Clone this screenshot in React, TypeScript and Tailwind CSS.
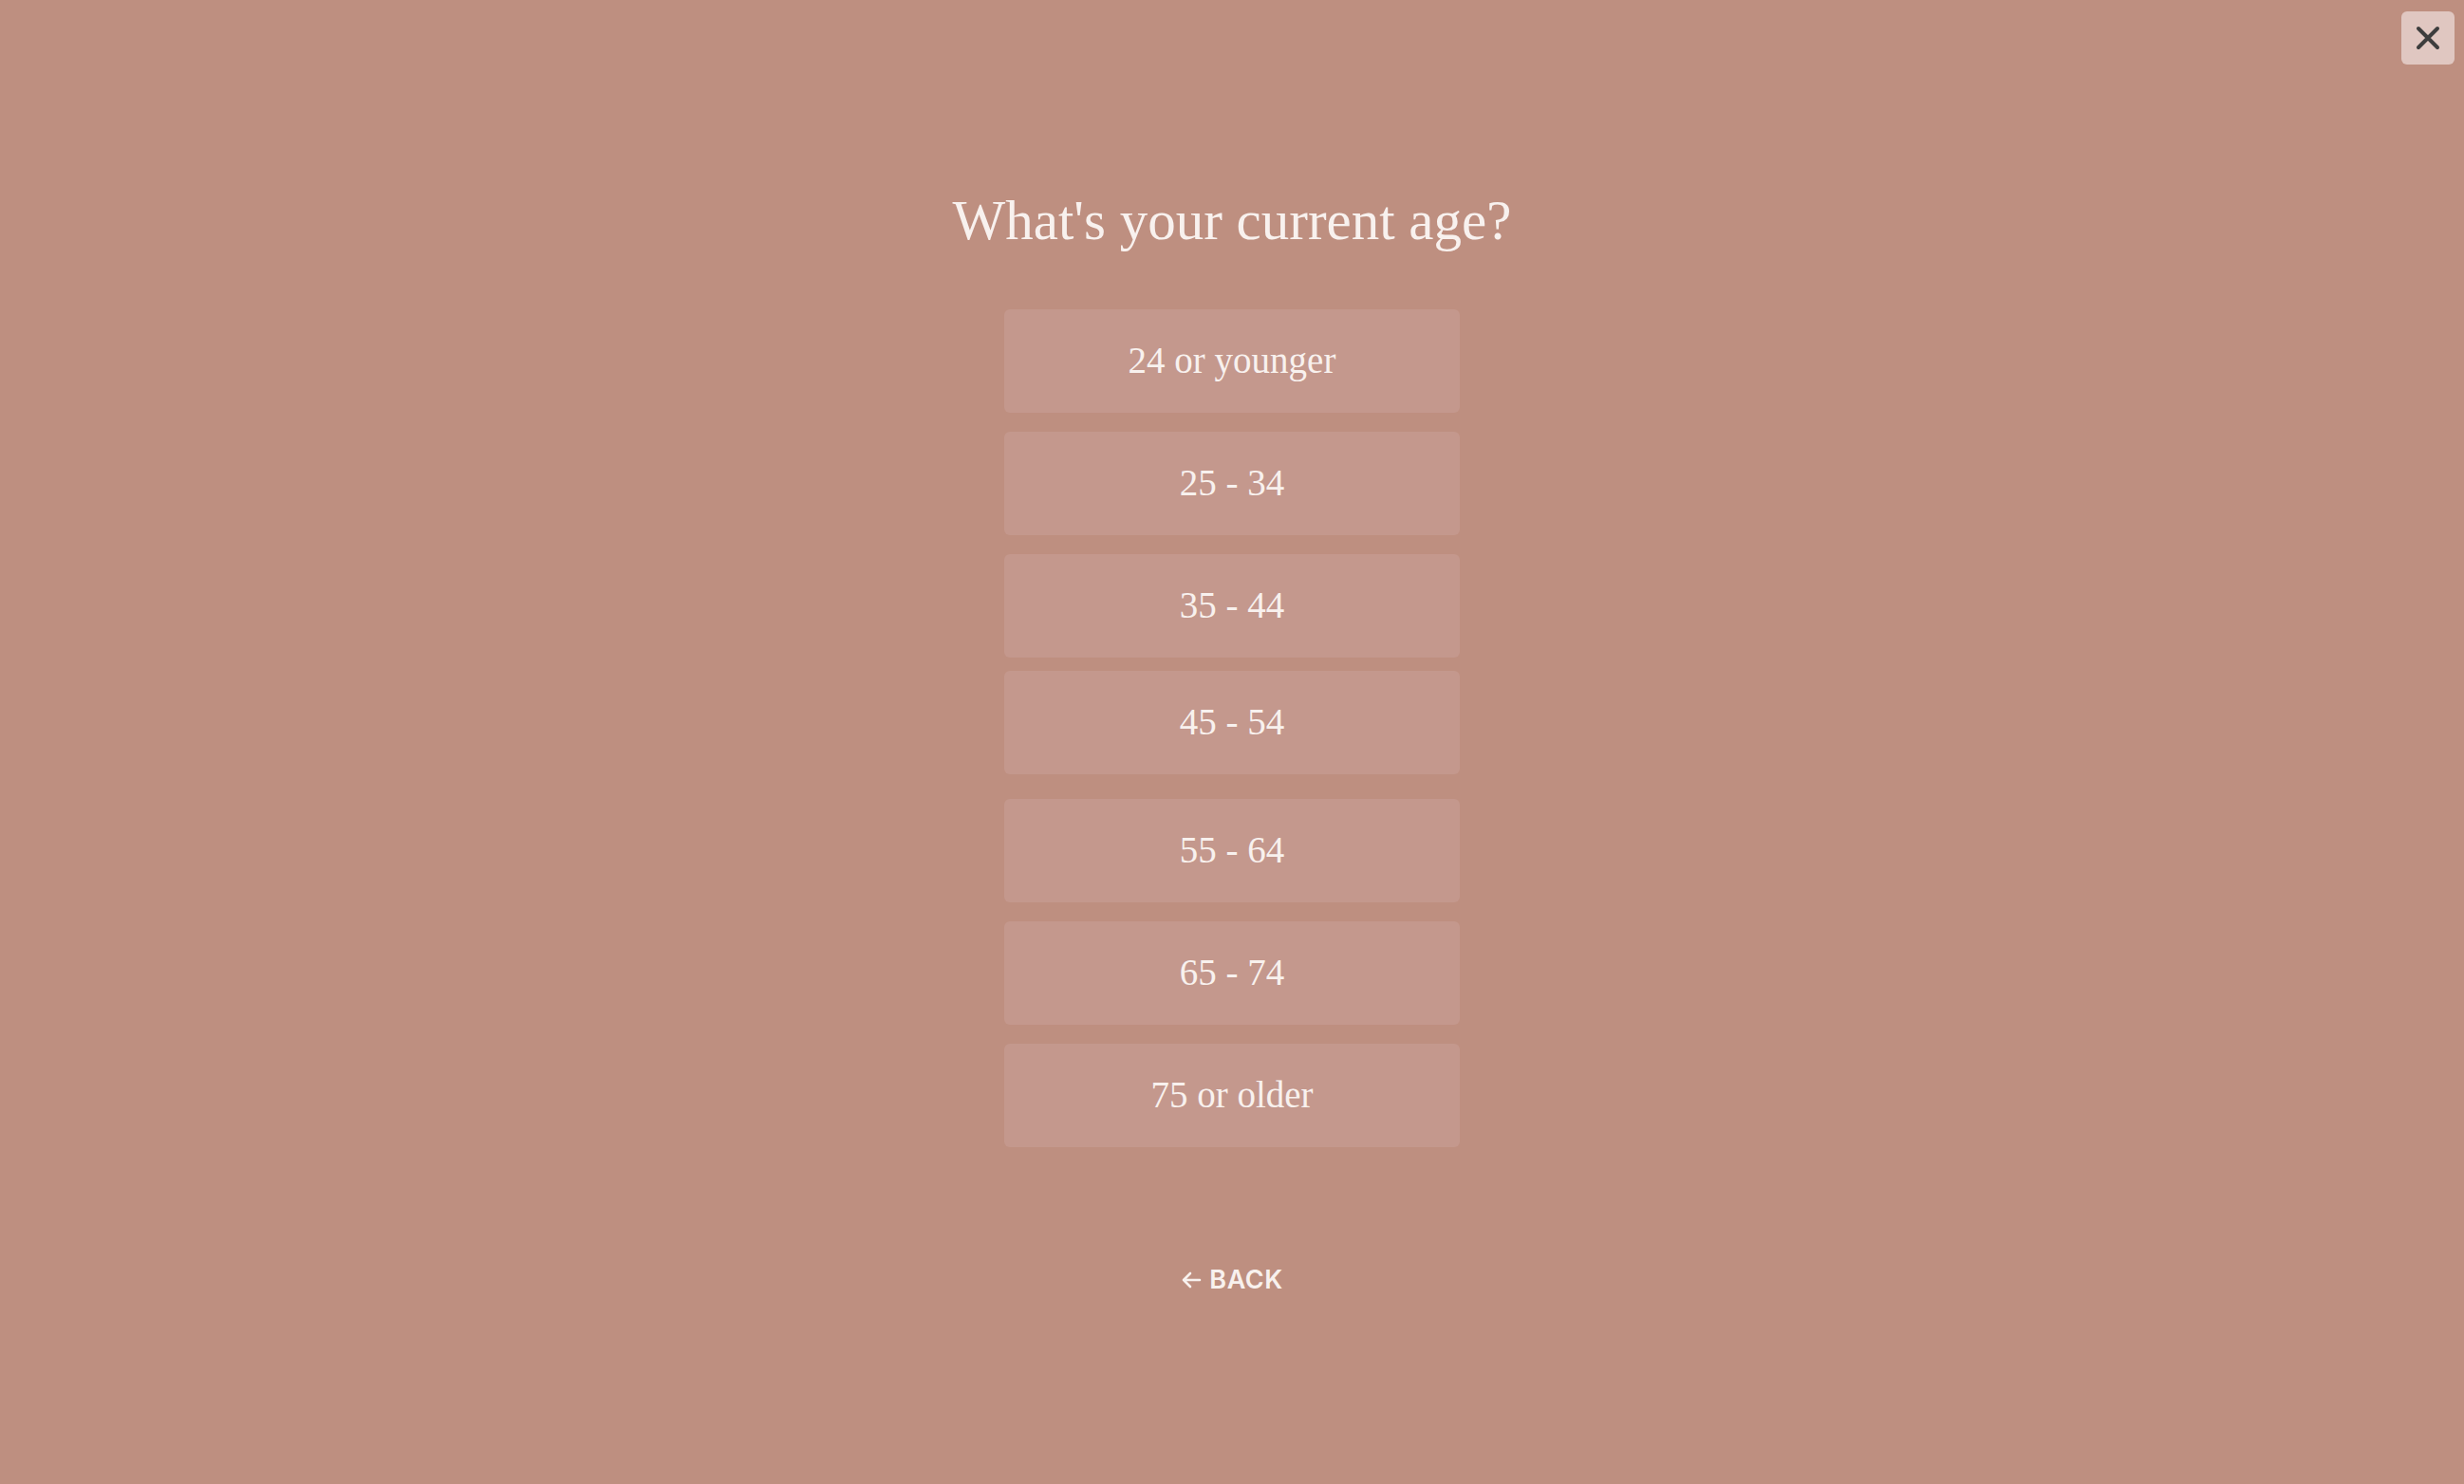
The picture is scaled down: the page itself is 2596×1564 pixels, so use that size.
import React from 'react';

// ── Data ───────────────────────────────────────────────────────────

const OPTIONS = [
  { label: '24 or younger', cls: '' },
  { label: '25 - 34', cls: '' },
  { label: '35 - 44', cls: '' },
  { label: '45 - 54', cls: '-mt-[6px] mb-[6px]' },
  { label: '55 - 64', cls: '' },
  { label: '65 - 74', cls: '' },
  { label: '75 or older', cls: '' },
];

const serif = { fontFamily: '"Liberation Serif", "DejaVu Serif", serif' };

// ── Sub-components ─────────────────────────────────────────────────

function CloseButton() {
  return (
    <button className="absolute right-[10px] top-[12px] flex h-[56px] w-[56px] items-center justify-center rounded-[6px] bg-[#e0c7c1]">
      <svg width="26" height="26" viewBox="0 0 26 26" fill="none">
        <path d="M3 3 L23 23 M23 3 L3 23" stroke="#3d3d3d" strokeWidth="4" strokeLinecap="round" />
      </svg>
    </button>
  );
}

function OptionButton({ label, cls }: { label: string; cls: string }) {
  return (
    <button
      className={`flex h-[109px] w-[480px] items-center justify-center rounded-[6px] bg-[#c4988d] text-[39px] text-[#f8f1ee] ${cls}`}
      style={serif}
    >
      {label}
    </button>
  );
}

// ── Main component ─────────────────────────────────────────────────

export default function App() {
  return (
    <div className="relative min-h-[1564px] w-full bg-[#be8f80]">
      <CloseButton />

      <div className="flex flex-col items-center pt-[196px]">
        <h1 className="text-[59px] leading-[72px] text-[#f8f1ee]" style={serif}>
          What's your current age?
        </h1>

        <div className="mt-[58px] flex flex-col gap-[20px]">
          {OPTIONS.map(o => (
            <OptionButton key={o.label} label={o.label} cls={o.cls} />
          ))}
        </div>

        <button
          className="mt-[120px] flex items-center gap-[8px] text-[27px] font-semibold tracking-[0.5px] text-[#f8f1ee]"
          style={{ fontFamily: 'Inter, "Liberation Sans", sans-serif' }}
        >
          <svg width="22" height="20" viewBox="0 0 22 20" fill="none">
            <path d="M20 10 H3 M10 3 L3 10 L10 17" stroke="#f8f1ee" strokeWidth="2.6" strokeLinecap="round" strokeLinejoin="round" />
          </svg>
          BACK
        </button>
      </div>
    </div>
  );
}
